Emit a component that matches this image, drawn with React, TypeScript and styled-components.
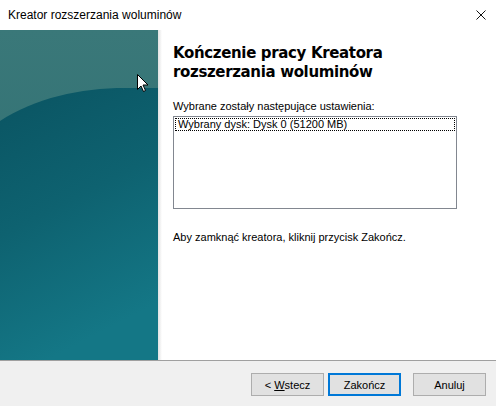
import styled, { createGlobalStyle } from "styled-components";

const GlobalStyle = createGlobalStyle`
  html, body {
    margin: 0;
    padding: 0;
    background: #ffffff;
  }
`;

const App = () => {
  return (
    <>
      <GlobalStyle />
      <Window>
        <TitleBar>
          <Title>Kreator rozszerzania woluminów</Title>
          <CloseIcon viewBox="0 0 10 10">
            <path d="M0.5 0.5 L9.5 9.5 M9.5 0.5 L0.5 9.5" stroke="#111" strokeWidth="1" />
          </CloseIcon>
        </TitleBar>
        <Main>
          <SidePanel>
            <PanelArt viewBox="0 0 158 330" preserveAspectRatio="none">
              <defs>
                <linearGradient id="lower" x1="0" y1="0" x2="0.3" y2="1">
                  <stop offset="0" stopColor="#0a5462" />
                  <stop offset="0.5" stopColor="#0e6270" />
                  <stop offset="1" stopColor="#147786" />
                </linearGradient>
                <linearGradient id="upper" x1="0" y1="0" x2="0" y2="1">
                  <stop offset="0" stopColor="#3a7879" />
                  <stop offset="1" stopColor="#2c6d71" />
                </linearGradient>
              </defs>
              <rect x="0" y="0" width="158" height="330" fill="url(#upper)" />
              <path d="M0 91 C35 68 80 58 125 58 L158 58 L158 330 L0 330 Z" fill="url(#lower)" />
            </PanelArt>
            <Cursor viewBox="0 0 12 19">
              <path
                d="M0.5 0.5 L0.5 15.5 L4 12 L6.5 17.5 L8.5 16.5 L6 11 L11 11 Z"
                fill="#ffffff"
                stroke="#000000"
                strokeWidth="1"
              />
            </Cursor>
          </SidePanel>
          <PanelEdge />
          <Content>
            <Heading>
              Kończenie pracy Kreatora
              <br />
              rozszerzania woluminów
            </Heading>
            <Label>Wybrane zostały następujące ustawienia:</Label>
            <ListBox>
              <ListItem $focused>Wybrany dysk: Dysk 0 (51200 MB)</ListItem>
            </ListBox>
            <Label>Aby zamknąć kreatora, kliknij przycisk Zakończ.</Label>
          </Content>
        </Main>
        <Footer>
          <Button>
            &lt; <u>W</u>stecz
          </Button>
          <Button $default>Zakończ</Button>
          <Button $gap>Anuluj</Button>
        </Footer>
      </Window>
    </>
  );
};

export default App;

const Window = styled.div`
  width: 496px;
  height: 406px;
  display: flex;
  flex-direction: column;
  background: #ffffff;
  overflow: hidden;
`;

const TitleBar = styled.div`
  height: 30px;
  display: flex;
  align-items: center;
  justify-content: space-between;
  padding: 0 10px 0 8px;
  box-sizing: border-box;
`;

const Title = styled.span`
  font-family: "Liberation Sans", Arial, sans-serif;
  font-size: 12px;
  color: #000000;
`;

const CloseIcon = styled.svg`
  width: 10px;
  height: 10px;
`;

const Main = styled.div`
  flex: 1;
  display: flex;
`;

const SidePanel = styled.div`
  position: relative;
  width: 158px;
  height: 330px;
`;

const PanelArt = styled.svg`
  display: block;
  width: 158px;
  height: 330px;
`;

const Cursor = styled.svg`
  position: absolute;
  left: 137px;
  top: 44px;
  width: 12px;
  height: 19px;
`;

const PanelEdge = styled.div`
  width: 4px;
  background: linear-gradient(to right, #e2e2e2, #f3f3f3 60%, #ffffff);
`;

const Content = styled.div`
  flex: 1;
  display: flex;
  flex-direction: column;
  padding: 14px 0 0 11px;
`;

const Heading = styled.h1`
  margin: 0 0 17px;
  font-family: "DejaVu Sans", Verdana, sans-serif;
  font-weight: bold;
  font-size: 15px;
  letter-spacing: -0.35px;
  line-height: 19px;
  color: #000000;
`;

const Label = styled.p`
  margin: 0;
  font-family: "Liberation Sans", Arial, sans-serif;
  font-size: 11px;
  line-height: 14px;
  color: #000000;
`;

const ListBox = styled.div`
  margin: 3px 0 21px;
  width: 284px;
  height: 93px;
  box-sizing: border-box;
  border: 1px solid #828790;
  padding: 1px;
  background: #ffffff;
`;

const ListItem = styled.div<{ $focused?: boolean }>`
  height: 13px;
  box-sizing: border-box;
  padding: 0 2px;
  border: 1px dotted ${(p) => (p.$focused ? "#000000" : "transparent")};
  font-family: "Liberation Sans", Arial, sans-serif;
  font-size: 11px;
  line-height: 11px;
  color: #000000;
  white-space: nowrap;
`;

const Footer = styled.div`
  height: 46px;
  box-sizing: border-box;
  border-top: 1px solid #a0a0a0;
  background: #f0f0f0;
  display: flex;
  align-items: flex-start;
  justify-content: flex-end;
  padding: 12px 10px 0 0;
  gap: 4px;
`;

const Button = styled.button<{ $default?: boolean; $gap?: boolean }>`
  width: 73px;
  height: 23px;
  margin-left: ${(p) => (p.$gap ? "8px" : "0")};
  box-sizing: border-box;
  background: #e1e1e1;
  border: ${(p) => (p.$default ? "2px solid #0078d7" : "1px solid #adadad")};
  font-family: "Liberation Sans", Arial, sans-serif;
  font-size: 11px;
  color: #000000;
  padding: 0;
  cursor: default;
`;
